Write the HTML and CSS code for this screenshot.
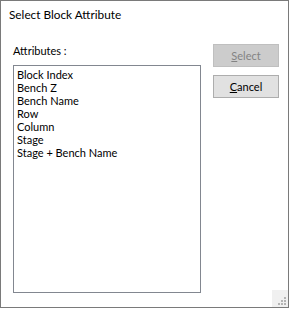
FILE: index.html
```html
<!DOCTYPE html>
<html>
<head>
<meta charset="utf-8">
<link rel="stylesheet" href="styles.css">
</head>
<body>
<div class="window">
  <div class="title">Select Block Attribute</div>
  <div class="content">
    <div class="left">
      <div class="label">Attributes :</div>
      <ul class="list">
        <li>Block Index</li>
        <li>Bench Z</li>
        <li>Bench Name</li>
        <li>Row</li>
        <li>Column</li>
        <li>Stage</li>
        <li>Stage + Bench Name</li>
      </ul>
    </div>
    <div class="right">
      <button class="btn disabled" disabled><u>S</u>elect</button>
      <button class="btn"><u>C</u>ancel</button>
    </div>
  </div>
  <div class="grip">
    <svg width="12" height="12" viewBox="0 0 12 12">
      <rect x="8" y="2" width="2" height="2" fill="#b4b4b4"/>
      <rect x="5" y="5" width="2" height="2" fill="#b4b4b4"/>
      <rect x="8" y="5" width="2" height="2" fill="#b4b4b4"/>
      <rect x="2" y="8" width="2" height="2" fill="#b4b4b4"/>
      <rect x="5" y="8" width="2" height="2" fill="#b4b4b4"/>
      <rect x="8" y="8" width="2" height="2" fill="#b4b4b4"/>
    </svg>
  </div>
</div>
</body>
</html>
```

FILE: styles.css
```css
html, body {
  margin: 0;
  padding: 0;
  background: #ffffff;
}
body {
  font-family: Lato, "Noto Sans", sans-serif;
  font-size: 11px;
  color: #000000;
}
.window {
  position: relative;
  box-sizing: border-box;
  width: 289px;
  height: 308px;
  border: 1px solid #7a7a7a;
  background: #ffffff;
}
.title {
  padding: 6px 0 0 8px;
  font-size: 11.8px;
  line-height: 16px;
  height: 16px;
}
.content {
  display: flex;
  margin-top: 20px;
  padding-left: 12px;
}
.left {
  display: flex;
  flex-direction: column;
  width: 188px;
}
.label {
  font-size: 11px;
  line-height: 15px;
  height: 15px;
  margin-bottom: 7px;
}
.list {
  box-sizing: border-box;
  width: 188px;
  height: 228px;
  margin: 0;
  padding: 2px 0 0 3px;
  list-style: none;
  border: 1px solid #828790;
  font-size: 11px;
  line-height: 13px;
}
.right {
  display: flex;
  flex-direction: column;
  gap: 8px;
  margin-left: 12px;
  margin-top: 1px;
}
.btn {
  box-sizing: border-box;
  width: 66px;
  height: 23px;
  padding: 0;
  font-family: Lato, "Noto Sans", sans-serif;
  font-size: 11px;
  color: #000000;
  background: #e1e1e1;
  border: 1px solid #adadad;
  border-radius: 0;
}
.btn.disabled {
  background: #cccccc;
  border-color: #bfbfbf;
  color: #838383;
}
.grip {
  position: absolute;
  right: 0;
  bottom: 0;
  width: 16px;
  height: 17px;
  background: #f0f0f0;
  display: flex;
  align-items: flex-end;
  justify-content: flex-end;
}
.grip svg {
  display: block;
}
```
